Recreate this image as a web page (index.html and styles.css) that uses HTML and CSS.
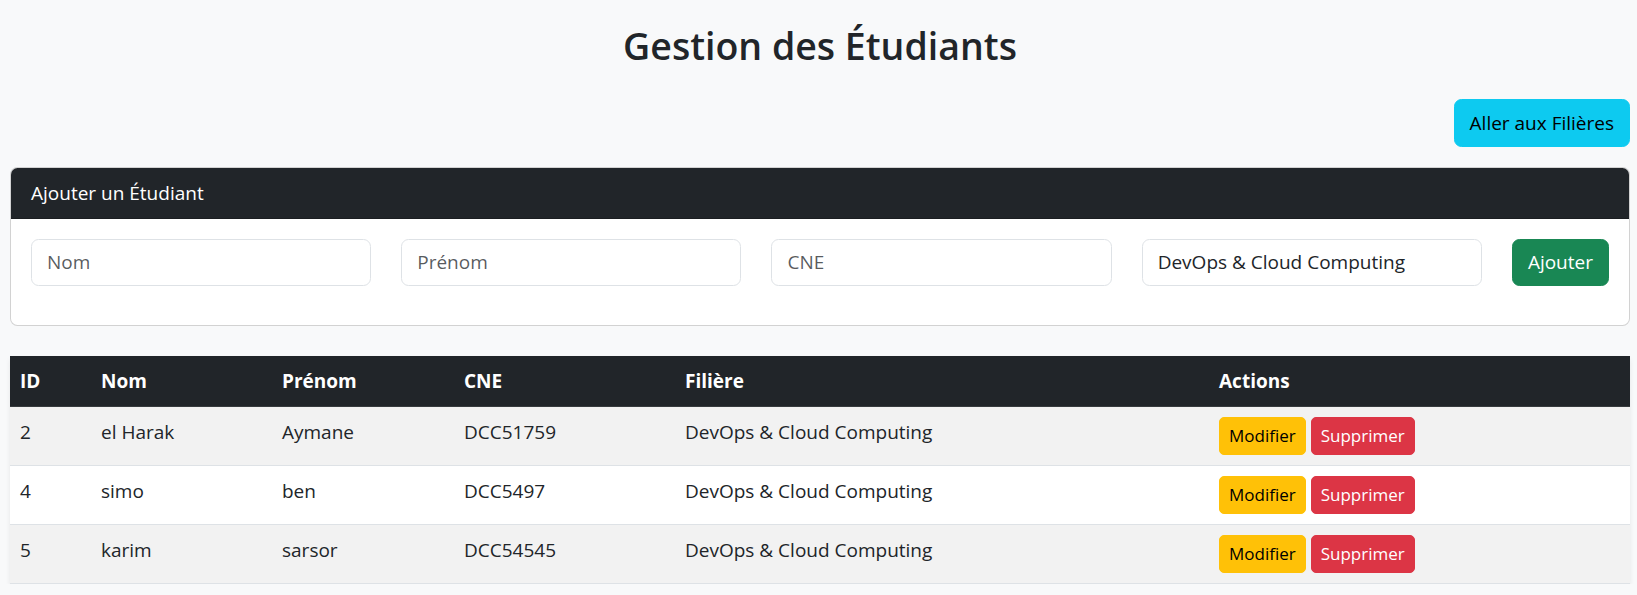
FILE: index.html
```html
<!DOCTYPE html>
<html lang="fr">
<head>
<meta charset="utf-8">
<title>Gestion des Étudiants</title>
<link rel="stylesheet" href="styles.css">
</head>
<body>
<div class="page">
  <h1 class="title">Gestion des Étudiants</h1>
  <div class="toolbar">
    <button class="btn btn-lg btn-info" type="button">Aller aux Filières</button>
  </div>
  <section class="card">
    <div class="card-header">Ajouter un Étudiant</div>
    <div class="card-body">
      <form class="form-row">
        <input class="field" type="text" placeholder="Nom">
        <input class="field" type="text" placeholder="Prénom">
        <input class="field" type="text" placeholder="CNE">
        <select class="field field-select">
          <option>DevOps &amp; Cloud Computing</option>
        </select>
        <button class="btn btn-lg btn-success" type="button">Ajouter</button>
      </form>
    </div>
  </section>
  <table class="table">
    <colgroup>
      <col class="c-id"><col class="c-nom"><col class="c-prenom"><col class="c-cne"><col class="c-filiere"><col class="c-actions">
    </colgroup>
    <thead>
      <tr><th>ID</th><th>Nom</th><th>Prénom</th><th>CNE</th><th>Filière</th><th>Actions</th></tr>
    </thead>
    <tbody>
      <tr class="striped">
        <td>2</td><td>el Harak</td><td>Aymane</td><td>DCC51759</td><td>DevOps &amp; Cloud Computing</td>
        <td><div class="actions"><button class="btn btn-sm btn-warning" type="button">Modifier</button><button class="btn btn-sm btn-danger" type="button">Supprimer</button></div></td>
      </tr>
      <tr>
        <td>4</td><td>simo</td><td>ben</td><td>DCC5497</td><td>DevOps &amp; Cloud Computing</td>
        <td><div class="actions"><button class="btn btn-sm btn-warning" type="button">Modifier</button><button class="btn btn-sm btn-danger" type="button">Supprimer</button></div></td>
      </tr>
      <tr class="striped">
        <td>5</td><td>karim</td><td>sarsor</td><td>DCC54545</td><td>DevOps &amp; Cloud Computing</td>
        <td><div class="actions"><button class="btn btn-sm btn-warning" type="button">Modifier</button><button class="btn btn-sm btn-danger" type="button">Supprimer</button></div></td>
      </tr>
    </tbody>
  </table>
</div>
</body>
</html>
```

FILE: styles.css
```css
* { box-sizing: border-box; }

body {
  margin: 0;
  background: #f8f9fa;
  color: #212529;
  font-family: "Open Sans", "Noto Sans", sans-serif;
  font-size: 19px;
  line-height: 30px;
}

.page {
  padding: 0 7px 0 10px;
}

.title {
  margin: 0;
  padding-top: 22px;
  font-size: 37.5px;
  line-height: 48px;
  font-weight: 600;
  text-align: center;
}

.toolbar {
  display: flex;
  justify-content: flex-end;
  margin-top: 29px;
}

.btn {
  font-family: inherit;
  border: 1px solid transparent;
  cursor: pointer;
}

.btn-lg {
  height: 47.5px;
  padding: 0 15px;
  font-size: 19px;
  line-height: 30px;
  border-radius: 7.5px;
}

.btn-info { background: #0dcaf0; border-color: #0dcaf0; color: #000; }
.btn-success { background: #198754; border-color: #198754; color: #fff; }
.btn-warning { background: #ffc107; border-color: #ffc107; color: #000; }
.btn-danger { background: #dc3545; border-color: #dc3545; color: #fff; }

.btn-sm {
  height: 38px;
  padding: 0 9px;
  font-size: 17px;
  line-height: 26px;
  border-radius: 5px;
}

.card {
  margin-top: 20px;
  background: #fff;
  border: 1px solid rgba(0, 0, 0, 0.175);
  border-radius: 7.5px;
  overflow: hidden;
}

.card-header {
  background: #212529;
  color: #fff;
  padding: 10px 20px;
  line-height: 30px;
  border-bottom: 1px solid rgba(0, 0, 0, 0.175);
}

.card-body {
  padding: 20px 20px 19px;
}

.form-row {
  display: flex;
  gap: 30px;
  margin: 0 0 20px;
}

.field {
  flex: 1 1 0;
  min-width: 0;
  height: 47px;
  padding: 0 15px;
  font-family: inherit;
  font-size: 19px;
  color: #212529;
  background: #fff;
  border: 1px solid #dee2e6;
  border-radius: 7.5px;
}

.field::placeholder {
  color: rgba(33, 37, 41, 0.75);
}

.field-select {
  appearance: none;
  -webkit-appearance: none;
}

.form-row .btn-lg {
  flex: 0 0 auto;
  height: 47px;
}

.table {
  width: 100%;
  margin-top: 30px;
  border-collapse: collapse;
  table-layout: fixed;
  box-shadow: 0 2.5px 5px rgba(0, 0, 0, 0.075);
}

.c-id { width: 81px; }
.c-nom { width: 181px; }
.c-prenom { width: 182px; }
.c-cne { width: 221px; }
.c-filiere { width: 534px; }

.table th,
.table td {
  padding: 10px;
  text-align: left;
  vertical-align: top;
  line-height: 30px;
}

.table th {
  background: #212529;
  color: #fff;
  font-weight: 700;
  border-bottom: 1px solid #373b3e;
}

.table td {
  background: #fff;
  border-bottom: 1px solid #dee2e6;
}

.table tr.striped td {
  background: #f2f2f2;
}

.actions {
  display: flex;
  gap: 5px;
}
```
